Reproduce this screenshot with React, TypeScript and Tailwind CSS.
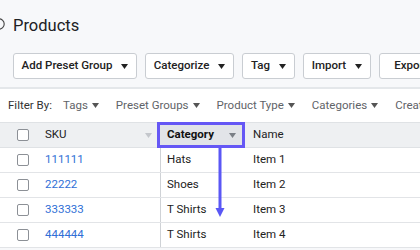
const buttons = [
    { label: "Add Preset Group", w: "w-[124px]" },
    { label: "Categorize", w: "w-[89px]" },
    { label: "Tag", w: "w-[53px]" },
    { label: "Import", w: "w-[68px]" },
    { label: "Export", w: "w-[80px]" },
];

const filters = ["Tags", "Preset Groups", "Product Type", "Categories", "Created"];

const rows = [
    { sku: "111111", category: "Hats", name: "Item 1" },
    { sku: "22222", category: "Shoes", name: "Item 2" },
    { sku: "333333", category: "T Shirts", name: "Item 3" },
    { sku: "444444", category: "T Shirts", name: "Item 4" },
];

function Caret({ className = "" }: { className?: string }) {
    return (
        <svg width="7" height="5" viewBox="0 0 7 5" className={className}>
            <path d="M0 0 L7 0 L3.5 5 Z" fill="currentColor" />
        </svg>
    );
}

function Checkbox() {
    return <div className="h-[12px] w-[12px] rounded-[2px] border-[1.5px] border-[#8c9096] bg-white"></div>;
}

export default function App() {
    return (
        <div className="relative h-[250px] w-[420px] overflow-hidden bg-[#f7f8fa] font-['Roboto',sans-serif] text-[#222]">
            {/* title */}
            <div className="mt-[12px] flex h-[28px] items-center pl-[13px]">
                <svg width="12" height="12" viewBox="0 0 12 12" className="absolute left-[-7px] top-[18px]">
                    <circle cx="6" cy="6" r="5.2" fill="none" stroke="#444" strokeWidth="1.1" />
                </svg>
                <h1 className="text-[16.5px] leading-[28px] text-[#202124]">Products</h1>
            </div>

            {/* actions */}
            <div className="mt-[13px] flex gap-[8px] pl-[13px]">
                {buttons.map((b) => (
                    <div
                        key={b.label}
                        className={`flex h-[26px] shrink-0 items-center justify-center gap-[9px] whitespace-nowrap rounded-[3px] border border-[#c9cdd2] bg-white text-[11.5px] font-medium text-[#222] ${b.w}`}
                    >
                        <span>{b.label}</span>
                        <Caret className="text-[#222]" />
                    </div>
                ))}
            </div>

            <div className="mt-[8px] h-[2px] bg-[#e4e7ea]"></div>

            {/* filters */}
            <div className="flex h-[33px] items-center whitespace-nowrap bg-white pl-[8px] text-[11.5px]">
                <span className="mr-[11px] text-[#333]">Filter By:</span>
                <div className="flex gap-[17px] text-[#5f6368]">
                    {filters.map((f) => (
                        <span key={f} className="flex items-center gap-[4px]">
                            {f}
                            <Caret className="text-[#555]" />
                        </span>
                    ))}
                </div>
            </div>

            {/* table */}
            <div className="bg-white text-[11.5px]">
                <div className="grid h-[26px] grid-cols-[37px_120px_88px_1fr] border-y border-[#dfe2e5] bg-[#eef0f2]">
                    <div className="flex items-center justify-end pr-[8px]">
                        <Checkbox />
                    </div>
                    <div className="flex items-center justify-between pl-[8px] pr-[5px]">
                        <span>SKU</span>
                        <Caret className="text-[#c4c7cc]" />
                    </div>
                    <div className="-mt-px -mb-px flex items-center justify-between border-[3px] border-[#6557f5] bg-[#e2e4e8] pl-[7px] pr-[6px]">
                        <span className="font-bold text-[#111]">Category</span>
                        <Caret className="text-[#7a7f86]" />
                    </div>
                    <div className="flex items-center pl-[8px]">Name</div>
                </div>
                {rows.map((r) => (
                    <div key={r.sku} className="grid h-[25px] grid-cols-[37px_120px_88px_1fr] border-b border-[#e2e4e7]">
                        <div className="flex items-center justify-end pr-[8px]">
                            <Checkbox />
                        </div>
                        <div className="flex items-center pl-[8px] text-[#2f6fd6]">{r.sku}</div>
                        <div className="ml-[3px] flex items-center border-l border-[#cfd2d6] pl-[6px] text-[#222]">{r.category}</div>
                        <div className="flex items-center pl-[8px] text-[#222]">{r.name}</div>
                    </div>
                ))}
            </div>

            {/* drag arrow */}
            <svg width="12" height="70" viewBox="0 0 12 70" className="absolute left-[214px] top-[148px]">
                <path d="M6 0 L6 62" stroke="#5a57f5" strokeWidth="3" />
                <path d="M1.5 60 L10.5 60 L6 69 Z" fill="#5a57f5" />
            </svg>
        </div>
    );
}
